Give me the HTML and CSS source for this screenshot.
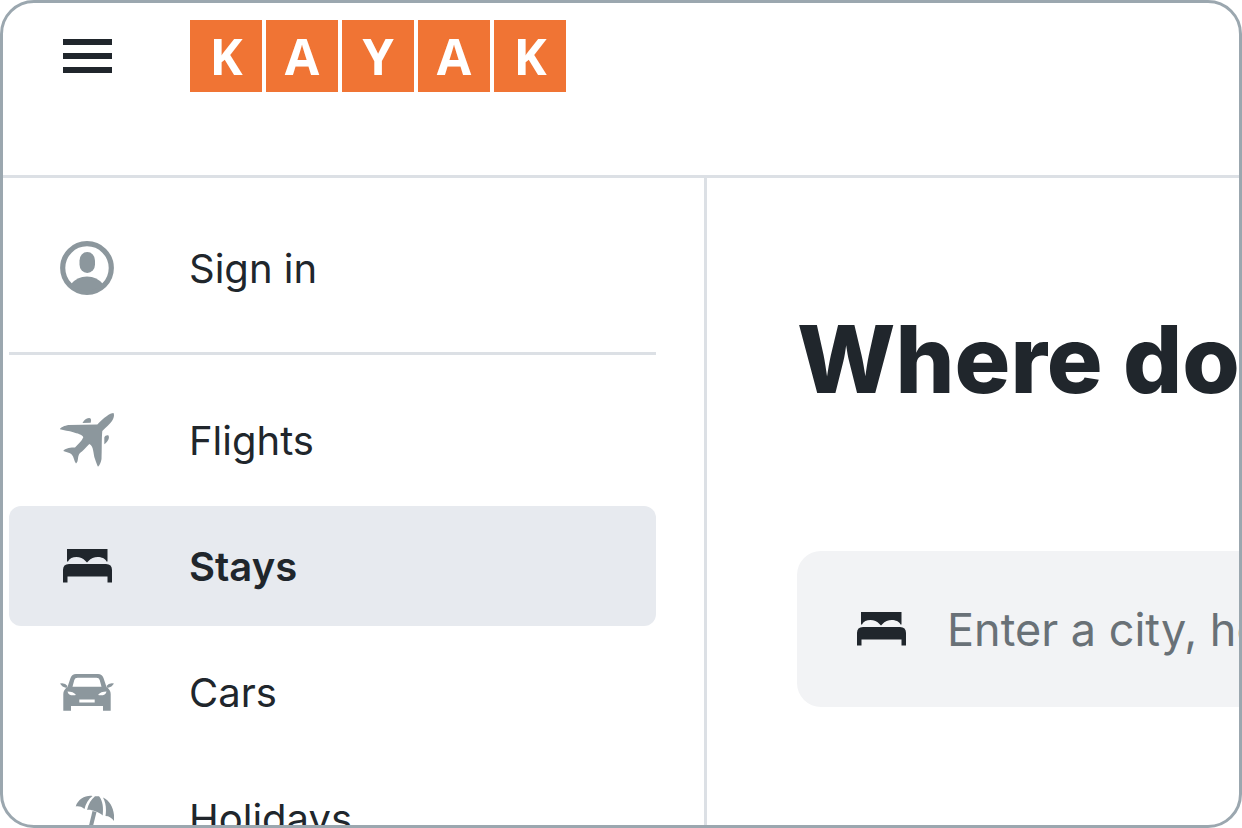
FILE: index.html
```html
<!DOCTYPE html>
<html lang="en">
<head>
  <meta charset="UTF-8">
  <meta name="viewport" content="width=device-width, initial-scale=1.0">
  <title>KAYAK</title>
  <link rel="stylesheet" href="styles.css">
</head>
<body>

  <!-- Shared icons -->
  <svg class="sprite" aria-hidden="true">
    <symbol id="icon-bed" viewBox="0 0 54 54">
      <path d="M7 10H47.500V22.500H46.500C44 17 33 16.500 28.500 22L27 23.500L25.500 22C21 16.500 10.500 17 8 22.500H7Z"/>
      <path d="M3 43.500V31Q3 25 9 25H46Q52 25 52 31V43.500H47.500V37.500H7.500V43.500Z"/>
    </symbol>
  </svg>

  <div class="frame">
    <header class="header">
      <button class="menu-button" aria-label="Menu">
        <span class="bar"></span>
        <span class="bar"></span>
        <span class="bar"></span>
      </button>
      <a class="logo" href="#">
        <span class="tile">K</span>
        <span class="tile">A</span>
        <span class="tile">Y</span>
        <span class="tile">A</span>
        <span class="tile">K</span>
      </a>
    </header>

    <div class="content">
      <nav class="sidebar">
        <a class="nav-item" href="#">
          <svg class="icon" viewBox="0 0 54 54">
            <circle cx="27" cy="27" r="24.300" fill="none" stroke="currentColor" stroke-width="5.200"/>
            <rect x="19.500" y="11" width="15.500" height="21" rx="7.700" ry="8.500"/>
            <path d="M10.500 43.500Q17 35.500 27 35.500Q37 35.500 43.500 43.500A25 25 0 0 1 10.500 43.500Z"/>
          </svg>
          Sign in
        </a>
        <hr class="divider">
        <a class="nav-item" href="#">
          <svg class="icon" viewBox="0 0 54 54">
            <path d="M53.500 0C50 0 44 4.500 37.300 11.500L8.500 12C5 12.500 0 14.500 0 16.300C4 17.500 9 17.800 13.300 19.300C17 20.500 22.500 21.500 23.300 24.300C22 28 18 31 15 34.500C11 34 4.500 35.500 3.300 38C6 39 10 39.500 11.700 41.500C14 44 14 48 16 50.500C19 48.500 17 43 20 40C23 38 26 34 29.300 31C34 33 33 41 35 46C36 49 37 52 38 53.700C40 52 41 49 41.500 46C42 37 41.500 26 42.300 18C46 14 50 11 52 8C54 5 54.500 2 53.500 0Z"/>
            <path d="M22.500 10C24 7 26 5.500 29 5C31 5 31.500 6.500 30.700 9.700Z"/>
            <path d="M44.300 31.300V24.500C45 22.500 47 22 48.500 22.500C50 26 47 29 44.300 31.300Z"/>
          </svg>
          Flights
        </a>
        <a class="nav-item active" href="#">
          <svg class="icon"><use href="#icon-bed"/></svg>
          Stays
        </a>
        <a class="nav-item" href="#">
          <svg class="icon" viewBox="0 0 54 54">
            <path fill-rule="evenodd" d="M16 9H38Q42 9 43.500 13L46.500 22Q50.700 25 50.700 29V45.700H43V41H11V45.700H3.300V29Q3.300 25 7.500 22L10.500 13Q12 9 16 9ZM17.500 12.700Q15 12.700 14.300 15L12.500 21.700H41.500L39.700 15Q39 12.700 36.500 12.700ZM7.500 26.500C8 30 12 31 16 30C14.500 27.500 11 26.500 7.500 26.500ZM46.500 26.500C46 30 42 31 38 30C39.500 27.500 43 26.500 46.500 26.500ZM19.300 34.500V37.500H34.700V34.500Z"/>
            <path d="M0 18.500Q5 17.500 7.500 21L6.500 23Q2 22 0 18.500ZM54 18.500Q49 17.500 46.500 21L47.500 23Q52 22 54 18.500Z"/>
          </svg>
          Cars
        </a>
        <a class="nav-item" href="#">
          <svg class="icon" viewBox="0 0 54 54">
            <path d="M15.700 15.500C18 8 26 4 32.500 5C28.500 8 25.500 13 24.500 18C21.500 15.500 18.500 15 15.700 15.500Z"/>
            <path d="M27 19C28.500 13 31 8.500 35 5.300H39C43 10 43.500 17 42.700 24.500C39 21 30 18 27 19Z"/>
            <path d="M43 6.500C51 10 55 20 54 30C52 27 49 25 45.500 25C46.500 18 46 12 43 6.500Z"/>
            <path d="M32.500 20L36.500 21L29 51H25Z"/>
          </svg>
          Holidays
        </a>
      </nav>

      <main class="main">
        <h1 class="title">Where do</h1>
        <label class="search">
          <svg class="icon"><use href="#icon-bed"/></svg>
          <input class="search-input" type="text" placeholder="Enter a city, hotel" aria-label="Destination">
        </label>
      </main>
    </div>
  </div>

</body>
</html>
```
FILE: styles.css
```css
* {
  box-sizing: border-box;
}

body {
  margin: 0;
  background-color: #fff;
  color: #20262c;
  font-family: Inter, "Liberation Sans", sans-serif;
}

.sprite {
  display: none;
}

.frame {
  display: flex;
  flex-direction: column;
  height: 100vh;
  overflow: hidden;
  border: 3px solid #9ba7af;
  border-radius: 34px;
}

/* Header */
.header {
  display: flex;
  flex-shrink: 0;
  align-items: flex-start;
  gap: 78px;
  padding: 17px 60px 83px;
  border-bottom: 3px solid #dce0e5;
}

.menu-button {
  display: flex;
  flex-direction: column;
  justify-content: center;
  gap: 8px;
  width: 49px;
  height: 72px;
  padding: 0;
  border: none;
  background-color: transparent;
  cursor: pointer;
}

.bar {
  height: 6px;
  background-color: #20262c;
}

.logo {
  display: flex;
  gap: 4px;
  text-decoration: none;
}

.tile {
  width: 72px;
  height: 72px;
  background-color: #f07434;
  color: #fff;
  font-family: "Open Sans", "Noto Sans", sans-serif;
  font-size: 50px;
  font-weight: 700;
  line-height: 72px;
  text-align: center;
}

.content {
  display: flex;
  flex: 1;
  min-height: 0;
}

/* Sidebar */
.sidebar {
  display: flex;
  flex-direction: column;
  flex-shrink: 0;
  gap: 6px;
  width: 704px;
  padding: 30px 48px 0 6px;
  border-right: 3px solid #dce0e5;
}

.nav-item {
  display: flex;
  flex-shrink: 0;
  align-items: center;
  gap: 75px;
  height: 120px;
  padding-left: 51px;
  border-radius: 12px;
  color: #20262c;
  font-size: 40px;
  text-decoration: none;
}

.nav-item.active {
  background-color: #e7eaef;
  font-weight: 600;
}

.icon {
  flex-shrink: 0;
  width: 54px;
  height: 54px;
  fill: currentColor;
}

.nav-item .icon {
  color: #8c979d;
}

.nav-item.active .icon {
  color: #20262c;
}

.divider {
  flex-shrink: 0;
  width: 100%;
  height: 3px;
  margin: 18px 0 19px;
  border: none;
  background-color: #dce0e5;
}

/* Search */
.main {
  flex: 1;
  min-width: 0;
  padding: 125px 0 0 90px;
  overflow: hidden;
}

.title {
  margin: 0 0 136px;
  font-size: 93px;
  font-weight: 800;
  line-height: 112px;
  white-space: nowrap;
}

.search {
  display: flex;
  align-items: center;
  gap: 39px;
  width: 200%;
  height: 156px;
  padding: 0 57px;
  border-radius: 24px;
  background-color: #f2f3f5;
}

.search-input {
  flex: 1;
  min-width: 0;
  padding: 0;
  border: none;
  outline: none;
  background-color: transparent;
  color: #20262c;
  font-family: inherit;
  font-size: 45px;
}

.search-input::placeholder {
  color: #697177;
  opacity: 1;
}
```
